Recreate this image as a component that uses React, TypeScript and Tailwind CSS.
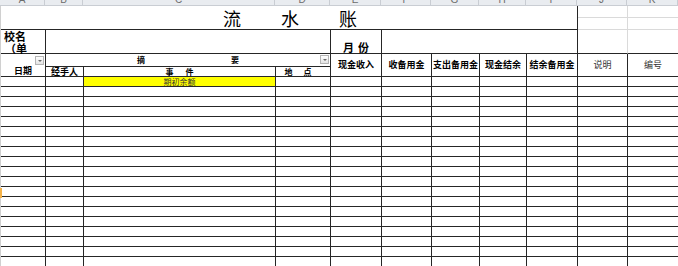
import React from "react";

const dark = "border-[#262626]";
const cols = ["A", "B", "C", "D", "E", "F", "G", "H", "I", "J", "K"];
const widths = [45, 38, 192, 55, 51, 50, 48, 47, 51, 50, 51];
const money = ["现金收入", "收备用金", "支出备用金", "现金结余", "结余备用金"];

const Filter = () => (
  <div className="w-[9px] h-[9px] border border-[#b5b5b5] bg-gradient-to-b from-white to-[#e4e4e4] flex items-center justify-center">
    <div className="w-0 h-0 border-l-[2px] border-r-[2px] border-t-[2px] border-l-transparent border-r-transparent border-t-[#6a6a6a]" />
  </div>
);

export default function App() {
  const rows = Array.from({ length: 19 }, (_, i) => i);
  return (
    <div className="relative w-[678px] h-[266px] overflow-hidden bg-white font-['Noto_Sans_CJK_SC',sans-serif] text-black">
      {/* column letters, cut off at the top */}
      <div className="flex h-[6px] overflow-hidden bg-[#e9ecf0] border-b border-[#c9cdd3]">
        {cols.map((c, i) => (
          <div
            key={c}
            style={{ width: widths[i] }}
            className="shrink-0 border-r border-[#c9cdd3] text-center text-[10px] leading-[10px] -mt-[5px] text-[#6b6b6b] font-['Liberation_Sans',sans-serif]"
          >
            {c}
          </div>
        ))}
      </div>

      <div className="grid border-l border-[#d0d0d0] grid-cols-[45px_38px_192px_55px_51px_50px_48px_47px_51px_50px_51px] grid-rows-[12px_12px_24px_13px_10px_repeat(19,10px)]">
        {/* title */}
        <div className={`col-[1/10] row-[1/3] border-r border-b ${dark} flex items-center justify-center gap-[40px] text-[18px] leading-none pl-[2px]`}>
          <span>流</span>
          <span>水</span>
          <span>账</span>
        </div>
        <div className="col-[10] row-[1] border-r border-b border-[#dadada]" />
        <div className="col-[11] row-[1] border-r border-b border-[#dadada]" />
        <div className="col-[10] row-[2] border-r border-b border-[#dadada]" />
        <div className="col-[11] row-[2] border-r border-b border-[#dadada]" />

        {/* school / month */}
        <div className={`col-[1] row-[3] border-r border-b ${dark} pl-[3px] text-[11px] leading-[12px] font-semibold`}>
          <div>校名</div>
          <div className="pl-[1px]">（单</div>
        </div>
        <div className={`col-[2/5] row-[3] border-r border-b ${dark}`} />
        <div className={`col-[5] row-[3] border-r border-b ${dark} flex items-end justify-center gap-[4px] text-[11px] leading-[12px] font-bold`}>
          <span>月</span>
          <span>份</span>
        </div>
        <div className={`col-[6/10] row-[3] border-r border-b ${dark}`} />
        <div className="col-[10] row-[3] border-r border-b border-r-[#dadada] border-b-[#262626]" />
        <div className="col-[11] row-[3] border-r border-b border-r-[#dadada] border-b-[#262626]" />

        {/* header rows */}
        <div className={`col-[1] row-[4/6] border-r border-b ${dark} relative flex items-end justify-center text-[9px] leading-[10px] font-bold`}>
          <div className="absolute top-[2px] right-[1px]">
            <Filter />
          </div>
          <span>日期</span>
        </div>
        <div className={`col-[2/5] row-[4] border-r border-b ${dark} relative flex items-center justify-center gap-[86px] text-[8px] leading-[10px] font-bold`}>
          <span>摘</span>
          <span>要</span>
          <div className="absolute top-[1px] right-[1px]">
            <Filter />
          </div>
        </div>
        <div className={`col-[2] row-[5] border-r border-b ${dark} flex items-center justify-center text-[9px] leading-[9px] font-bold`}>
          经手人
        </div>
        <div className={`col-[3] row-[5] border-r border-b ${dark} flex items-center justify-center gap-[12px] text-[8px] leading-[9px] font-bold`}>
          <span>事</span>
          <span>件</span>
        </div>
        <div className={`col-[4] row-[5] border-r border-b ${dark} flex items-center justify-center gap-[11px] text-[8px] leading-[9px] font-bold pr-[10px]`}>
          <span>地</span>
          <span>点</span>
        </div>
        {money.map((m, i) => (
          <div
            key={m}
            className={`row-[4/6] border-r border-b ${dark} flex items-center justify-center text-[9px] leading-[10px] font-bold whitespace-nowrap`}
            style={{ gridColumn: i + 5 }}
          >
            {m}
          </div>
        ))}
        <div className={`col-[10] row-[4/6] border-r border-b ${dark} flex items-center justify-center text-[9px] leading-[10px] text-[#333]`}>
          说明
        </div>
        <div className={`col-[11] row-[4/6] border-r border-b ${dark} flex items-center justify-center text-[9px] leading-[10px] text-[#333]`}>
          编号
        </div>

        {/* data rows */}
        {rows.map((r) =>
          cols.map((c, ci) => (
            <div
              key={`${r}-${c}`}
              className={`border-r border-b ${dark} ${
                r === 0 && ci === 2 ? "bg-[#ffff00] flex items-center justify-center text-[8px] leading-[9px] text-[#333]" : ""
              }`}
            >
              {r === 0 && ci === 2 ? "期初余额" : null}
            </div>
          ))
        )}
      </div>

      {/* selected row marker in the row header */}
      <div className="absolute left-0 top-[188px] w-[2px] h-[10px] bg-[#f5b34a]" />
    </div>
  );
}
